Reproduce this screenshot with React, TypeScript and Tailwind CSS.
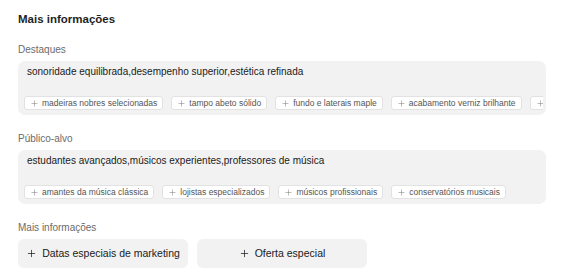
import { Plus } from 'lucide-react';

const SECTIONS = [
  {
    label: 'Destaques',
    value: 'sonoridade equilibrada,desempenho superior,estética refinada',
    chips: [
      'madeiras nobres selecionadas',
      'tampo abeto sólido',
      'fundo e laterais maple',
      'acabamento verniz brilhante',
      'cordas premium',
    ],
  },
  {
    label: 'Público-alvo',
    value: 'estudantes avançados,músicos experientes,professores de música',
    chips: [
      'amantes da música clássica',
      'lojistas especializados',
      'músicos profissionais',
      'conservatórios musicais',
    ],
  },
];

export default function App() {
  return (
    <div
      className="w-[567px] h-[275px] bg-white px-[18px] pt-[10px] text-[#1f1f1f] overflow-hidden"
      style={{ fontFamily: '"Liberation Sans", Arial, sans-serif' }}
    >
      <h1 className="text-[11.5px] font-bold leading-[18px]">Mais informações</h1>

      {SECTIONS.map((section, i) => (
        <div key={section.label} className={i === 0 ? 'mt-[14px]' : 'mt-[16px]'}>
          <div className="text-[10px] leading-[16px] text-[#6b6b6b] mb-[3px]">{section.label}</div>
          <div className="w-[528px] rounded-[7px] bg-[#f2f2f2] pl-[6px] pr-[3px] pt-[3px] pb-[5px]">
            <div className="pl-[3px] text-[10px] leading-[16px] text-[#1a1a1a]">{section.value}</div>
            <div className="mt-[16px] flex gap-[8px] overflow-hidden">
              {section.chips.map((chip) => (
                <span
                  key={chip}
                  className="flex shrink-0 items-center gap-[3px] h-[14px] rounded-[3px] border border-[#e2e2e2] bg-white px-[5px] text-[8.5px] leading-none whitespace-nowrap text-[#555]"
                >
                  <Plus size={9} strokeWidth={1.3} className="text-[#777]" />
                  {chip}
                </span>
              ))}
            </div>
          </div>
        </div>
      ))}

      <div className="mt-[16px]">
        <div className="text-[10px] leading-[16px] text-[#6b6b6b] mb-[3px]">Mais informações</div>
        <div className="flex gap-[9px]">
          {['Datas especiais de marketing', 'Oferta especial'].map((b) => (
            <button
              key={b}
              className="flex w-[170px] h-[29px] items-center justify-center gap-[5px] rounded-[6px] bg-[#f2f2f2] text-[10.5px] whitespace-nowrap text-[#1a1a1a]"
            >
              <Plus size={11} strokeWidth={1.6} />
              {b}
            </button>
          ))}
        </div>
      </div>
    </div>
  );
}
